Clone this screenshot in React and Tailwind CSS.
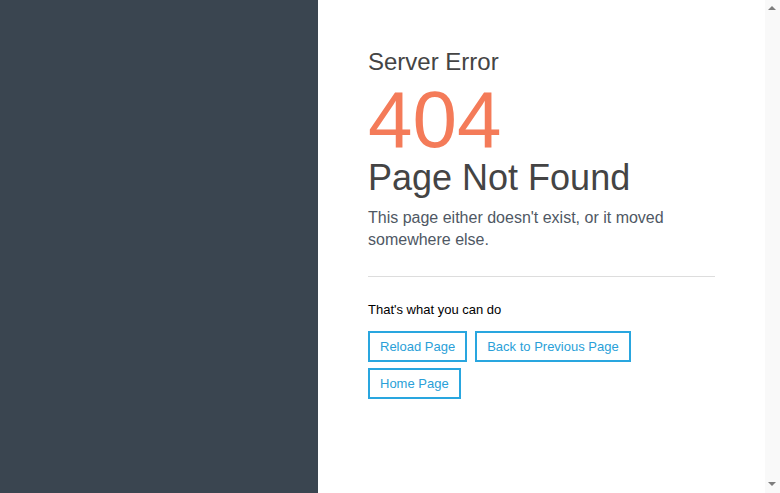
import React from 'react';

const actions = ['Reload Page', 'Back to Previous Page', 'Home Page'];

const ScrollArrow = ({ down }) => (
  <svg width="15" height="15" viewBox="0 0 15 15" className="block">
    <polygon points={down ? '3,4 11,4 7,8' : '7,6 11,10 3,10'} fill="#7d7d7d" />
  </svg>
);

const App = () => {
  return (
    <div className="flex h-screen bg-white font-['Liberation_Sans',Arial,sans-serif]">
      <aside className="w-[318px] shrink-0 bg-[#3a4550]" />
      <main className="flex-1 px-[50px] pt-[48px]">
        <h2 className="text-[24px] leading-[28px] text-[#444]">Server Error</h2>
        <h1 className="mt-[4px] text-[80px] leading-[80px] text-[#f47b59]">404</h1>
        <h3 className="text-[36px] leading-[36px] text-[#444]">Page Not Found</h3>
        <p className="mt-[11px] text-[16px] leading-[22px] text-[#4f5864]">
          This page either doesn't exist, or it moved somewhere else.
        </p>
        <hr className="mt-[25px] border-t border-[#ddd]" />
        <p className="mt-[25px] text-[13px] leading-[15px] text-black">That's what you can do</p>
        <div className="mt-[14px] flex flex-wrap gap-x-2 gap-y-[6px]">
          {actions.map((label) => (
            <button
              key={label}
              className="h-[31px] border-2 border-[#29a6df] bg-white px-[10px] text-[13px] leading-[15px] text-[#2a9fd8]"
            >
              {label}
            </button>
          ))}
        </div>
      </main>
      <div className="flex w-[15px] shrink-0 flex-col justify-between bg-[#f9f9f9]">
        <ScrollArrow />
        <ScrollArrow down />
      </div>
    </div>
  );
};

export default App;
